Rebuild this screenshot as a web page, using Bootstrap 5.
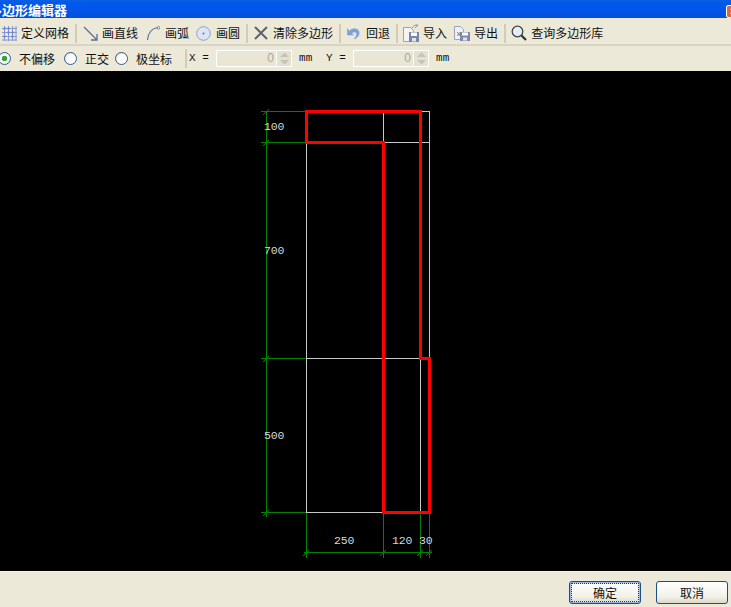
<!DOCTYPE html>
<html lang="zh"><head><meta charset="utf-8"><title>多边形编辑器</title>
<link rel="stylesheet" href="https://cdn.jsdelivr.net/npm/bootstrap@5.3.0/dist/css/bootstrap.min.css">
<style>
html,body{margin:0;height:100%;background:#ece9d8;overflow:hidden}
body{font:12px/1 "Noto Sans CJK SC","Liberation Sans",sans-serif;color:#111}
.xp-win{width:731px;height:607px}
.xp-title{height:18px;background:linear-gradient(180deg,#0a5fe0 0,#0058ee 20%,#0355e8 60%,#0250d8 100%);overflow:hidden}
.xp-title-text{color:#fff;font-weight:700;font-size:13px;margin-left:-11px;margin-top:3px;line-height:14px;white-space:nowrap}
.xp-close{width:14px;height:13px;margin-top:5px;margin-right:-9px;background:#e2663f;border:1px solid #fff;border-radius:2px;color:#fff;font:700 10px/11px "Liberation Sans",sans-serif;text-align:center}
.xp-tools{height:28px;border-bottom:2px solid #d8d5c2;padding:4px 0 0 2px}
.xp-tool{display:flex;align-items:center;gap:4px;height:22px;white-space:nowrap}
.xp-tool svg{flex:none;display:block}
.xp-sep{width:2px;height:19px;background:#cfccb9;flex:none}
.xp-opts{height:25px;white-space:nowrap}
.xp-radio{appearance:none;width:13px;height:13px;margin:0;border:1px solid #2f5f8f;border-radius:50%;background:radial-gradient(circle at 65% 65%,#fff 45%,#d4d2c8 100%);flex:none}
.xp-radio:checked{background:radial-gradient(circle,#2fa82f 0 2.6px,#fff 3px,#fff 45%,#dddbd0 100%)}
.xp-rl{display:flex;align-items:center;gap:8px}
.xp-mono{font:11px/1 "Liberation Mono",monospace}
.xp-num{display:flex;width:76px;height:17px;border:1px solid #fff;background:#e9e6d6;flex:none}
.xp-num input.form-control:disabled{width:59px;height:15px;border:0;padding:0 2px 0 0;min-height:0;border-radius:0;background:transparent;text-align:right;font:12px/15px "Liberation Sans",sans-serif;color:#aaa89a}
.xp-spin{width:15px;border-left:1px solid #fff;background:#e4e1d0;display:flex;flex-direction:column;align-items:center;justify-content:space-around}
.xp-canvas{height:500px;background:#000;display:block;width:731px}
.xp-labels{opacity:.99}
.xp-labels text{font:11.5px "Liberation Mono",monospace;fill:#dcdcdc;letter-spacing:-.2px}
.xp-foot{height:36px;padding:9px 3px 3px 0;border-top:1px solid #f4f2e8}
.xp-btn{width:72px;height:23px;padding:0;font:12px/17px "Noto Sans CJK SC",sans-serif;color:#111;border:1px solid #1b4f86;border-radius:3px;background:linear-gradient(180deg,#fff,#f2f1e8 70%,#dcd9ca)}
.xp-btn-def{box-shadow:inset 0 0 0 1px #9db8e4,inset 0 0 0 2px #dfe8f6;outline:1px dotted #333;outline-offset:-3px}
</style></head><body>
<div class="xp-win d-flex flex-column">
<div class="xp-title d-flex justify-content-between">
<div class="xp-title-text">多边形编辑器</div><div class="xp-close">×</div>
</div>
<div class="xp-tools d-flex align-items-center">
<div class="xp-tool"><svg width="15" height="16" viewBox="0 0 15 16"><path d="M0 3.500h15M0 7.500h15M0 11.500h15M0 15h15M2.500 1v15M6.500 1v15M10.500 1v15M14 1v15" stroke="#8397d2" fill="none"/><path d="M1.500 2.500h2v2h-2zM5.500 6.500h2v2h-2zM9.500 10.500h2v2h-2zM5.500 2.500h2v2h-2zM9.500 6.500h2v2h-2zM1.500 10.500h2v2h-2z" fill="#6e84c4"/></svg><span>定义网格</span></div>
<div class="xp-sep" style="margin:0 6px"></div>
<div class="xp-tool" style="margin-right:8px"><svg width="15" height="15" viewBox="0 0 15 15"><path d="M1 1l13 13M14 8v6H8" stroke="#5a6d92" stroke-width="1.300" fill="none"/></svg><span>画直线</span></div>
<div class="xp-tool" style="margin-right:7px;gap:5px"><svg width="14" height="15" viewBox="0 0 14 15"><path d="M1.500 14C2 7 6 2 12.500 1.500" stroke="#55709f" stroke-width="1.200" fill="none"/><circle cx="12.500" cy="1.800" r="1.300" fill="#fff" stroke="#777"/></svg><span>画弧</span></div>
<div class="xp-tool" style="gap:5px"><svg width="15" height="15" viewBox="0 0 15 15"><circle cx="7.500" cy="7.500" r="6.800" fill="#dbe5f6" stroke="#8ba3d0"/><circle cx="7.500" cy="7.500" r="1" fill="#56709f"/></svg><span>画圆</span></div>
<div class="xp-sep" style="margin:0 6px"></div>
<div class="xp-tool" style="gap:5px"><svg width="14" height="14" viewBox="0 0 14 14"><path d="M1 1l12 12M13 1L1 13" stroke="#5f6468" stroke-width="2" fill="none"/></svg><span>清除多边形</span></div>
<div class="xp-sep" style="margin:0 6px"></div>
<div class="xp-tool" style="gap:6px"><svg width="13" height="14" viewBox="0 0 13 14"><path d="M2 5.500C4 2 11 1.500 12 6c.6 3.500-2 6-5 7 2-2 3.200-4 2.500-6C8.500 5.500 6 5.500 4.500 7.500L6.500 9H.5V2.500z" fill="#7ea2dc" stroke="#6f90c6" stroke-width=".5"/></svg><span>回退</span></div>
<div class="xp-sep" style="margin:0 5px 0 6px"></div>
<div class="xp-tool" style="margin-right:7px"><svg width="16" height="18" viewBox="0 0 16 18"><path d="M.5 3.500h7l3 3v11H.5z" fill="#f3f3f6" stroke="#9aa3bd"/><rect x="6" y="8" width="10" height="10" fill="#7c86aa"/><rect x="8" y="8.500" width="6" height="3.500" fill="#fff"/><rect x="9" y="14" width="4" height="3.500" fill="#dfe3ee"/><path d="M9 4c2-3 4-3 6-3M12 4l3-3" stroke="#8c8c8c" fill="none"/></svg><span>导入</span></div>
<div class="xp-tool"><svg width="16" height="16" viewBox="0 0 16 16"><path d="M.5 1.500h6l3 3v10H.5z" fill="#f0f1f5" stroke="#9aa3bd"/><rect x="6" y="7" width="10" height="9" fill="#8089ad"/><rect x="8" y="7.500" width="6" height="3" fill="#fff"/><rect x="9" y="12.500" width="4" height="3" fill="#dfe3ee"/><path d="M3 7l3 3M3 10h3V7" stroke="#6d8a5a" fill="none"/></svg><span>导出</span></div>
<div class="xp-sep" style="margin:0 5px 0 6px"></div>
<div class="xp-tool"><svg width="16" height="16" viewBox="0 0 16 16"><circle cx="6.500" cy="6.500" r="5.300" fill="#e4eef8" stroke="#444" stroke-width="1.300"/><path d="M10.500 10.500l4.500 4.500" stroke="#333" stroke-width="2.200"/></svg><span>查询多边形库</span></div>
</div>
<div class="xp-opts d-flex align-items-center">
<label class="xp-rl" style="margin-left:-2px;margin-right:9px"><input class="xp-radio" type="radio" name="m" checked><span>不偏移</span></label>
<label class="xp-rl" style="margin-right:6px"><input class="xp-radio" type="radio" name="m"><span>正交</span></label>
<label class="xp-rl"><input class="xp-radio" type="radio" name="m"><span>极坐标</span></label>
<div class="xp-sep" style="margin:0 2px 0 13px"></div>
<span class="xp-mono" style="width:27px">X =</span>
<div class="xp-num"><input class="form-control" disabled value="0"><div class="xp-spin"><svg width="9" height="5"><path d="M0 5l4.500-4.500L9 5z" fill="#c6c4b4"/></svg><svg width="9" height="5"><path d="M0 0l4.500 4.500L9 0z" fill="#c6c4b4"/></svg></div></div>
<span class="xp-mono" style="margin-left:7px;width:27px">mm</span>
<span class="xp-mono" style="width:27px">Y =</span>
<div class="xp-num"><input class="form-control" disabled value="0"><div class="xp-spin"><svg width="9" height="5"><path d="M0 5l4.500-4.500L9 5z" fill="#c6c4b4"/></svg><svg width="9" height="5"><path d="M0 0l4.500 4.500L9 0z" fill="#c6c4b4"/></svg></div></div>
<span class="xp-mono" style="margin-left:7px">mm</span>
</div>
<svg class="xp-canvas" viewBox="0 71 731 500" shape-rendering="crispEdges">
<g stroke="#c8c8c8" fill="none"><path d="M306.500 111V512.500M383.500 111V512.500M420.500 111V512.500M429.500 111V512.500M306 111.500H429.500M306 142.500H429.500M306 358.500H429.500M306 512.500H429.500"/></g>
<g stroke="#058005" fill="none"><path d="M266.500 111V517M261 111.500H306M261 142.500H306M261 358.500H306M261 512.500H306M306.500 513V558M383.500 513V558M420.500 513V558M429.500 513V558M304 552.500H432"/></g>
<g stroke="#058005" fill="none" shape-rendering="auto"><path d="M263 115l6-6M263 146l6-6M263 362l6-6M263 516l6-6M303 556l6-6M380 556l6-6M417 556l6-6M426 556l6-6"/></g>
<path d="M306.500 111.500H420.500V358.500H429.500V512.500H383.500V142.500H306.500Z" fill="none" stroke="#f00" stroke-width="3" stroke-linejoin="miter"/>
<g class="xp-labels"><text x="264" y="130">100</text><text x="264" y="254">700</text><text x="264" y="439">500</text>
<text x="334" y="544">250</text><text x="392" y="544">120</text><text x="419" y="544">30</text></g>
</svg>
<div class="xp-foot d-flex justify-content-end" style="gap:15px">
<button class="btn xp-btn xp-btn-def" type="button">确定</button>
<button class="btn xp-btn" type="button">取消</button>
</div>
</div>
</body></html>
